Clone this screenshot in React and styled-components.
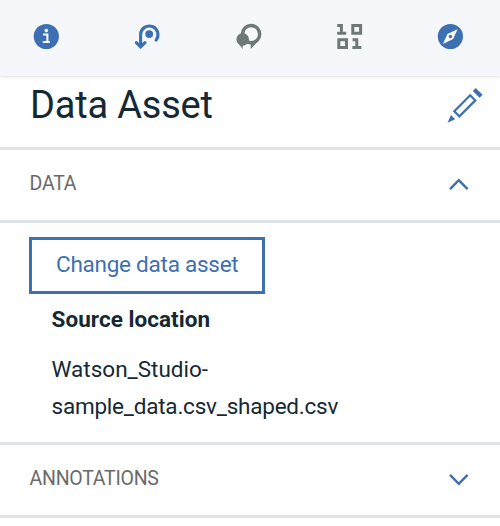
import React from "react";
import styled, { createGlobalStyle } from "styled-components";

const Global = createGlobalStyle`
  *, *::before, *::after { box-sizing: border-box; }
  body { margin: 0; background: #fff; }
`;

const Panel = styled.main`
  width: 500px;
  height: 526px;
  overflow: hidden;
  background: #fff;
  color: #152935;
  font-family: Roboto, "Liberation Sans", sans-serif;
`;

const Tabs = styled.nav`
  display: flex;
  justify-content: space-between;
  align-items: flex-start;
  height: 76px;
  padding: 20px 33px 0 30px;
  background: #f5f7fb;
  box-shadow: 0 1px 3px rgba(0, 0, 0, 0.12);
`;

const Tab = styled.button`
  display: flex;
  padding: 0;
  border: 0;
  background: none;
  color: ${(p) => (p.$muted ? "#6f7878" : "#3d70b2")};
`;

const Icon = styled.svg`
  display: block;
  width: ${(p) => p.$w}px;
  height: ${(p) => p.$h}px;
  color: #3d70b2;
  ${Tab} & { color: inherit; }
`;

const Header = styled.header`
  display: flex;
  justify-content: space-between;
  height: 74px;
  padding: 0 16px 0 30px;
  border-bottom: 3px solid #dfe3e6;
`;

const Title = styled.h1`
  margin: 7px 0 0;
  font-size: 38px;
  line-height: 44px;
  font-weight: 400;
  letter-spacing: -0.2px;
`;

const EditButton = styled.button`
  margin: 10px 0 0;
  padding: 0;
  border: 0;
  background: none;
  align-self: flex-start;
`;

const SectionHeader = styled.div`
  display: flex;
  justify-content: space-between;
  align-items: center;
  height: 73px;
  padding: 0 30px 3px 29.5px;
  border-bottom: 3px solid #dfe3e6;
`;

const SectionTitle = styled.h2`
  margin: 0;
  font-size: 19.5px;
  font-weight: 400;
  line-height: 24px;
  letter-spacing: ${(p) => p.$tracking}px;
  color: #6a6a6a;
`;

const Content = styled.section`
  height: 222px;
  padding: 14px 29px 0;
  border-bottom: 3px solid #dfe3e6;
`;

const ChangeButton = styled.button`
  display: block;
  width: 236px;
  height: 57px;
  padding: 0 0 3px 24px;
  border: 3px solid #3d70b2;
  background: #fff;
  color: #3d70b2;
  font: 400 22.5px/28px Roboto, "Liberation Sans", sans-serif;
  letter-spacing: -0.25px;
  text-align: left;
  white-space: nowrap;
`;

const Label = styled.h3`
  margin: 11px 0 0 22.5px;
  font-size: 22.5px;
  font-weight: 700;
  line-height: 28px;
  letter-spacing: 0.05px;
`;

const FileName = styled.p`
  margin: 18px 0 0 22.5px;
  font-size: 22.5px;
  line-height: 37px;
  letter-spacing: ${(p) => p.$tracking}px;
  & + & { margin-top: 0; }
`;

const InfoIcon = () => (
  <Icon $w={32} $h={32} viewBox="0 0 32 32">
    <circle cx="16.3" cy="16.5" r="12.6" fill="currentColor" />
    <circle cx="16.3" cy="10.6" r="1.8" fill="#fff" />
    <path d="M13 14.4h4.4v7M12.8 21.9h7" fill="none" stroke="#fff" strokeWidth="2" />
  </Icon>
);

const LineageIcon = () => (
  <Icon $w={32} $h={32} viewBox="1.2 0 32 32">
    <path d="M10.8 26V14.2a8.7 8.7 0 1 1 15.5 5.9" fill="none" stroke="currentColor" strokeWidth="3.1" strokeLinecap="round" />
    <path d="M6.5 22.6l4.3 4.3 4.4-4.3" fill="none" stroke="currentColor" strokeWidth="3.1" strokeLinecap="round" />
    <circle cx="19.4" cy="14.1" r="3.9" fill="currentColor" />
  </Icon>
);

const CommentsIcon = () => (
  <Icon $w={32} $h={32} viewBox="2.5 0 32 32">
    <circle cx="20.6" cy="14.1" r="8.6" fill="none" stroke="currentColor" strokeWidth="3.4" />
    <path d="M20.2 21.5v7.5l7-7.4z" fill="currentColor" />
    <circle cx="12.2" cy="19.4" r="6.3" fill="currentColor" />
    <path d="M8 23.6l4.2 5.4v-5z" fill="currentColor" />
  </Icon>
);

const BinaryIcon = () => (
  <Icon $w={32} $h={32} viewBox="0.8 0 32 32">
    <path d="M4 5.4h4.2V13M4 13.2h9M19.6 5.6h7.8v7.7h-7.8zM5.6 19.8h7.7v7.6H5.6zM19.4 19.7h4.2v7.5M19.2 27.4h9" fill="none" stroke="currentColor" strokeWidth="3" />
  </Icon>
);

const CompassIcon = () => (
  <Icon $w={32} $h={32} viewBox="0 0 32 32">
    <circle cx="15.4" cy="16.5" r="12.6" fill="currentColor" />
    <path d="M22.6 9.2l-4.5 9.9-10.2 4.8 4.5-9.9z" fill="#fff" />
    <circle cx="15.4" cy="16.5" r="1.7" fill="currentColor" />
  </Icon>
);

const PencilIcon = () => (
  <Icon $w={38} $h={38} viewBox="0 0 38 38">
    <path d="M8.3 25.3L24.2 9.3l5.1 5.1-15.9 16z" fill="none" stroke="currentColor" strokeWidth="2.2" />
    <path d="M26.8 4.9l3-3 6.8 6.8-3 3zM5 29.1l4.2 4.2L1.5 36.7z" fill="currentColor" />
  </Icon>
);

const Chevron = ({ open }) => (
  <Icon $w={22} $h={16} viewBox="0 0 22 16">
    <path d={open ? "M2 13.2l8.8-9 8.8 9" : "M2 3.8l8.8 9 8.8-9"} fill="none" stroke="currentColor" strokeWidth="2.4" />
  </Icon>
);

export default function App() {
  return (
    <Panel>
      <Global />
      <Tabs>
        <Tab aria-label="Information"><InfoIcon /></Tab>
        <Tab aria-label="Lineage"><LineageIcon /></Tab>
        <Tab $muted aria-label="Comments"><CommentsIcon /></Tab>
        <Tab $muted aria-label="Data"><BinaryIcon /></Tab>
        <Tab aria-label="Explore"><CompassIcon /></Tab>
      </Tabs>
      <Header>
        <Title>Data Asset</Title>
        <EditButton aria-label="Edit"><PencilIcon /></EditButton>
      </Header>
      <SectionHeader>
        <SectionTitle $tracking={-0.2}>DATA</SectionTitle>
        <Chevron open />
      </SectionHeader>
      <Content>
        <ChangeButton>Change data asset</ChangeButton>
        <Label>Source location</Label>
        <FileName $tracking={0}>Watson_Studio-</FileName>
        <FileName $tracking={-0.22}>sample_data.csv_shaped.csv</FileName>
      </Content>
      <SectionHeader>
        <SectionTitle $tracking={-0.25}>ANNOTATIONS</SectionTitle>
        <Chevron />
      </SectionHeader>
    </Panel>
  );
}
